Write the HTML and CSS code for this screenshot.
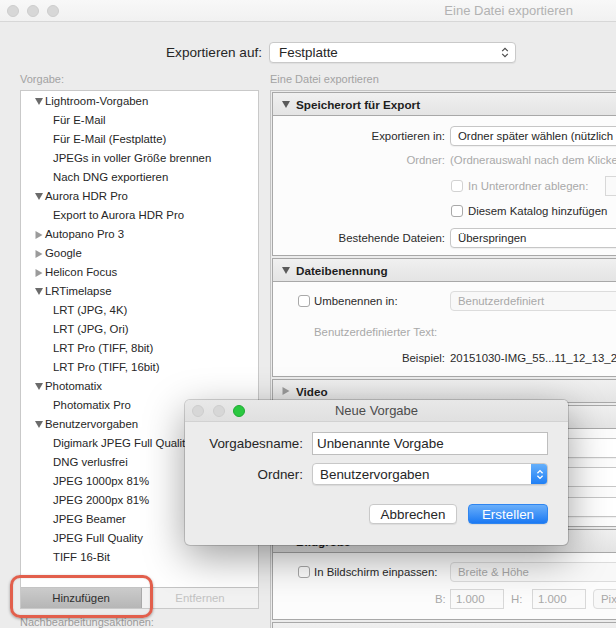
FILE: index.html
```html
<!DOCTYPE html>
<html lang="de">
<head>
<meta charset="utf-8">
<title>Eine Datei exportieren</title>
<link rel="stylesheet" href="styles.css">
</head>
<body>
<div class="titlebar">
  <div class="lights"><span class="light"></span><span class="light"></span><span class="light"></span></div>
  <div class="wtitle">Eine Datei exportieren</div>
</div>

<div class="exportbar">
  <div class="exlabel">Exportieren auf:</div>
  <div class="popup">
    <span>Festplatte</span>
    <svg class="chev" width="8" height="11" viewBox="0 0 8 11"><path d="M1.2 4.2 L4 1.4 L6.8 4.2 M1.2 6.8 L4 9.6 L6.8 6.8" fill="none" stroke="#4a4a4a" stroke-width="1.2"/></svg>
  </div>
</div>

<div class="headings">
  <div>Vorgabe:</div>
  <div>Eine Datei exportieren</div>
</div>

<div class="main">
  <div class="leftcol">
    <div class="listbox">
      <div class="tree">
        <div class="row group"><svg class="tri" width="8" height="7" viewBox="0 0 8 7"><polygon points="0,0 8,0 4,7" fill="#6b6b6b"/></svg>Lightroom-Vorgaben</div>
        <div class="row child">Für E-Mail</div>
        <div class="row child">Für E-Mail (Festplatte)</div>
        <div class="row child">JPEGs in voller Größe brennen</div>
        <div class="row child">Nach DNG exportieren</div>
        <div class="row group"><svg class="tri" width="8" height="7" viewBox="0 0 8 7"><polygon points="0,0 8,0 4,7" fill="#6b6b6b"/></svg>Aurora HDR Pro</div>
        <div class="row child">Export to Aurora HDR Pro</div>
        <div class="row group"><svg class="tri" width="8" height="8" viewBox="0 0 8 8"><polygon points="0.5,0 7.5,4 0.5,8" fill="#9b9b9b"/></svg>Autopano Pro 3</div>
        <div class="row group"><svg class="tri" width="8" height="8" viewBox="0 0 8 8"><polygon points="0.5,0 7.5,4 0.5,8" fill="#9b9b9b"/></svg>Google</div>
        <div class="row group"><svg class="tri" width="8" height="8" viewBox="0 0 8 8"><polygon points="0.5,0 7.5,4 0.5,8" fill="#9b9b9b"/></svg>Helicon Focus</div>
        <div class="row group"><svg class="tri" width="8" height="7" viewBox="0 0 8 7"><polygon points="0,0 8,0 4,7" fill="#6b6b6b"/></svg>LRTimelapse</div>
        <div class="row child">LRT (JPG, 4K)</div>
        <div class="row child">LRT (JPG, Ori)</div>
        <div class="row child">LRT Pro (TIFF, 8bit)</div>
        <div class="row child">LRT Pro (TIFF, 16bit)</div>
        <div class="row group"><svg class="tri" width="8" height="7" viewBox="0 0 8 7"><polygon points="0,0 8,0 4,7" fill="#6b6b6b"/></svg>Photomatix</div>
        <div class="row child">Photomatix Pro</div>
        <div class="row group"><svg class="tri" width="8" height="7" viewBox="0 0 8 7"><polygon points="0,0 8,0 4,7" fill="#6b6b6b"/></svg>Benutzervorgaben</div>
        <div class="row child">Digimark JPEG Full Quality</div>
        <div class="row child">DNG verlusfrei</div>
        <div class="row child">JPEG 1000px 81%</div>
        <div class="row child">JPEG 2000px 81%</div>
        <div class="row child">JPEG Beamer</div>
        <div class="row child">JPEG Full Quality</div>
        <div class="row child">TIFF 16-Bit</div>
      </div>
      <div class="listbuttons">
        <div class="lbtn add">Hinzufügen</div>
        <div class="lbtn remove">Entfernen</div>
      </div>
    </div>
    <div class="postlabel">Nachbearbeitungsaktionen:</div>
  </div>

  <div class="rightcol">
    <div class="section">
      <div class="shead"><svg class="tri" width="8" height="7" viewBox="0 0 8 7"><polygon points="0,0 8,0 4,7" fill="#5a5a5a"/></svg>Speicherort für Export</div>
      <div class="form f1">
        <div class="lab">Exportieren in:</div>
        <div class="ctl"><div class="sel">Ordner später wählen (nützlich für Ablage)</div></div>
        <div class="lab dim">Ordner:</div>
        <div class="ctl dim">(Ordnerauswahl nach dem Klicken auf Exportieren)</div>
        <div class="lab"></div>
        <div class="ctl"><span class="cb off"></span><span class="dim">In Unterordner ablegen:</span><span class="field off wide"></span></div>
        <div class="lab"></div>
        <div class="ctl"><span class="cb"></span><span>Diesem Katalog hinzufügen</span></div>
        <div class="lab">Bestehende Dateien:</div>
        <div class="ctl"><div class="sel">Überspringen</div></div>
      </div>
    </div>

    <div class="section">
      <div class="shead"><svg class="tri" width="8" height="7" viewBox="0 0 8 7"><polygon points="0,0 8,0 4,7" fill="#5a5a5a"/></svg>Dateibenennung</div>
      <div class="form f2">
        <div class="lab left"><span class="cb"></span><span>Umbenennen in:</span></div>
        <div class="ctl"><div class="sel off">Benutzerdefiniert</div></div>
        <div class="lab left wide dim">Benutzerdefinierter Text:</div>
        <div class="ctl"></div>
        <div class="lab">Beispiel:</div>
        <div class="ctl">20151030-IMG_55...11_12_13_2.jpg</div>
      </div>
    </div>

    <div class="section">
      <div class="shead"><svg class="tri" width="8" height="8" viewBox="0 0 8 8"><polygon points="0.5,0 7.5,4 0.5,8" fill="#9b9b9b"/></svg>Video</div>
    </div>

    <div class="section">
      <div class="shead"><svg class="tri" width="8" height="7" viewBox="0 0 8 7"><polygon points="0,0 8,0 4,7" fill="#5a5a5a"/></svg>Dateieinstellungen</div>
      <div class="form f4">
        <div class="lab">Bildformat:</div>
        <div class="ctl"><div class="sel">JPEG</div></div>
        <div class="lab">Qualität:</div>
        <div class="ctl"><span class="field wide"></span></div>
        <div class="lab">Farbraum:</div>
        <div class="ctl"><div class="sel">sRGB</div></div>
      </div>
    </div>

    <div class="section">
      <div class="shead"><svg class="tri" width="8" height="7" viewBox="0 0 8 7"><polygon points="0,0 8,0 4,7" fill="#5a5a5a"/></svg>Bildgröße</div>
      <div class="form f5">
        <div class="lab left"><span class="cb"></span><span>In Bildschirm einpassen:</span></div>
        <div class="ctl"><div class="sel off">Breite &amp; Höhe</div></div>
        <div class="lab"></div>
        <div class="ctl dims">
          <span class="dim blab">B:</span><span class="field off num">1.000</span>
          <span class="dim hlab">H:</span><span class="field off num">1.000</span>
          <span class="sel off unit">Pixel</span>
        </div>
      </div>
    </div>

    <div class="section">
      <div class="shead"><svg class="tri" width="8" height="8" viewBox="0 0 8 8"><polygon points="0.5,0 7.5,4 0.5,8" fill="#9b9b9b"/></svg>Ausgabeschärfe</div>
    </div>
  </div>
</div>

<div class="highlight"></div>

<div class="dialog">
  <div class="dtitle">
    <div class="lights dl"><span class="light"></span><span class="light"></span><span class="light green"></span></div>
    <div class="dtext">Neue Vorgabe</div>
  </div>
  <div class="dbody">
    <div class="dlab">Vorgabesname:</div>
    <div class="dinput">Unbenannte Vorgabe</div>
    <div class="dlab">Ordner:</div>
    <div class="dpopup">
      <span>Benutzervorgaben</span>
      <span class="dstep"><svg width="8" height="11" viewBox="0 0 8 11"><path d="M1.4 4.2 L4 1.6 L6.6 4.2 M1.4 6.8 L4 9.4 L6.6 6.8" fill="none" stroke="#ffffff" stroke-width="1.3"/></svg></span>
    </div>
    <div class="dbtns">
      <div class="btn">Abbrechen</div>
      <div class="btn primary">Erstellen</div>
    </div>
  </div>
</div>
</body>
</html>
```

FILE: styles.css
```css
* { box-sizing: border-box; }
html, body { margin: 0; padding: 0; }
body {
  width: 616px;
  height: 628px;
  overflow: hidden;
  position: relative;
  background: #ececec;
  font-family: "Liberation Sans", Arial, sans-serif;
  color: #2a2a2a;
}

/* window title bar */
.titlebar {
  height: 22px;
  display: flex;
  align-items: center;
  padding-left: 7px;
  background: linear-gradient(#f8f8f8, #f1f1f1);
  border-bottom: 1px solid #d7d7d7;
}
.lights { display: flex; gap: 8px; }
.light {
  width: 12px;
  height: 12px;
  border-radius: 50%;
  background: #d7d7d7;
  border: 1px solid #cdcdcd;
}
.wtitle {
  margin-left: auto;
  margin-right: 43px;
  font-size: 13px;
  color: #b2b2b2;
}

/* export target */
.exportbar {
  margin-top: 20px;
  display: grid;
  grid-template-columns: 262px 247px;
  column-gap: 7px;
  align-items: center;
}
.exlabel { text-align: right; font-size: 13.6px; color: #262626; }
.popup {
  height: 21px;
  display: flex;
  align-items: center;
  justify-content: space-between;
  padding: 0 6px 0 9px;
  background: #fff;
  border: 1px solid #c9c9c9;
  border-radius: 4px;
  box-shadow: 0 1px 1px rgba(0,0,0,0.06);
  font-size: 13.4px;
  color: #262626;
}

.headings {
  margin-top: 9px;
  height: 14px;
  display: grid;
  grid-template-columns: 250px auto;
  padding-left: 20px;
  font-size: 11px;
  line-height: 14px;
  color: #a3a3a3;
}

/* main columns */
.main {
  margin-top: 4px;
  display: grid;
  grid-template-columns: 239px 370px;
  column-gap: 11px;
  padding-left: 20px;
}

.listbox {
  height: 519px;
  display: flex;
  flex-direction: column;
  background: #fff;
  border: 1px solid #c9c9c9;
}
.tree { flex: 1; padding-top: 1px; font-size: 11.4px; color: #262626; }
.row { height: 19px; line-height: 19px; white-space: nowrap; overflow: hidden; }
.group { display: flex; align-items: center; padding-left: 14px; }
.group .tri { margin-right: 2px; }
.child { padding-left: 32px; }

.listbuttons {
  height: 21px;
  display: flex;
  border-top: 1px solid #c4c4c4;
  font-size: 11.4px;
}
.lbtn { display: flex; align-items: center; justify-content: center; }
.add {
  width: 121px;
  background: linear-gradient(#cbcbcb, #b6b6b6);
  border-right: 1px solid #a9a9a9;
  color: #2e2e2e;
}
.remove {
  flex: 1;
  background: #f2f2f2;
  color: #c3c3c3;
}
.postlabel {
  margin-top: 7px;
  font-size: 11px;
  line-height: 13px;
  color: #9c9c9c;
}

/* right settings panel */
.rightcol {
  border-left: 1px solid #c3c3c3;
  border-top: 1px solid #c3c3c3;
  padding: 1px 0 0 1px;
  height: 560px;
}
.section {
  border: 1px solid #a8a8a8;
  border-right: none;
  margin-bottom: 2px;
  background: #fcfcfc;
}
.shead {
  height: 22px;
  display: flex;
  align-items: center;
  gap: 6px;
  padding-left: 9px;
  background: linear-gradient(#f0f0f0, #e4e4e4);
  font-size: 11.7px;
  font-weight: bold;
  color: #1e1e1e;
}
.section .shead + .form { border-top: 1px solid #a8a8a8; }

.form {
  display: grid;
  grid-template-columns: 172px 1fr;
  column-gap: 5px;
  align-items: center;
  font-size: 11.4px;
  color: #2a2a2a;
  white-space: nowrap;
}
.f1 { padding: 8px 0 1px; grid-template-rows: 24px 24px 28px 22px 32px; }
.f2 { padding: 7px 0 11px; grid-template-rows: 24px 38px 14px; }
.f4 { padding: 5px 0 4px; grid-template-rows: 28px 30px 30px; }
.f5 { padding: 7px 0 5px; grid-template-rows: 24px 30px; }

.lab { text-align: right; }
.lab.left { display: flex; align-items: center; gap: 4px; padding-left: 24px; text-align: left; }
.lab.wide { padding-left: 41px; }
.ctl { display: flex; align-items: center; gap: 5px; overflow: visible; }
.dim { color: #a9a9a9; }

.sel {
  height: 20px;
  width: 240px;
  display: flex;
  align-items: center;
  padding-left: 7px;
  background: #fff;
  border: 1px solid #c6c6c6;
  border-radius: 4px;
  box-shadow: 0 1px 1px rgba(0,0,0,0.05);
  color: #262626;
}
.sel.off { background: #f8f8f8; border-color: #dcdcdc; color: #a8a8a8; box-shadow: none; }

.cb {
  width: 12px;
  height: 12px;
  flex: none;
  margin-left: 1px;
  background: #fff;
  border: 1px solid #a9a9a9;
  border-radius: 3px;
}
.cb.off { border-color: #d2d2d2; }

.field {
  height: 20px;
  background: #fff;
  border: 1px solid #c6c6c6;
}
.field.wide { width: 60px; margin-left: 12px; }
.f4 .field.wide { width: 240px; margin-left: 0; }
.field.off { border-color: #d8d8d8; background: #fafafa; }
.dims { gap: 0; }
.blab { margin-left: -15px; width: 15px; }
.num {
  width: 54px;
  display: flex;
  align-items: center;
  padding-left: 5px;
  color: #a8a8a8;
}
.hlab { margin-left: 7px; width: 21px; }
.unit { width: 60px; margin-left: 7px; }

/* red annotation */
.highlight {
  position: absolute;
  left: 10px;
  top: 575px;
  width: 143px;
  height: 43px;
  border: 3.5px solid #e25f4c;
  border-radius: 10px;
  box-shadow: 0 1px 3px rgba(0,0,0,0.35), inset 0 0 2px rgba(0,0,0,0.15);
}

/* modal dialog */
.dialog {
  position: absolute;
  left: 185px;
  top: 400px;
  width: 383px;
  height: 145px;
  background: #ececec;
  border-radius: 5px;
  overflow: hidden;
  box-shadow: 0 0 0 1px rgba(0,0,0,0.16), 0 12px 40px rgba(0,0,0,0.38);
}
.dtitle {
  height: 22px;
  position: relative;
  display: flex;
  align-items: center;
  padding-left: 7px;
  background: linear-gradient(#e8e8e8, #e0e0e0);
  border-bottom: 1px solid #d2d2d2;
}
.dl { gap: 8.5px; }
.light.green { background: #2ac840; border-color: #1faa33; }
.dtext {
  position: absolute;
  left: 0;
  right: 0;
  text-align: center;
  font-size: 13px;
  color: #4c4c4c;
  pointer-events: none;
}
.dbody {
  display: grid;
  grid-template-columns: 118px 236px;
  column-gap: 9px;
  row-gap: 8px;
  align-items: center;
  padding-top: 10px;
  font-size: 13.4px;
  color: #262626;
}
.dlab { text-align: right; }
.dinput {
  height: 23px;
  display: flex;
  align-items: center;
  padding-left: 4px;
  background: #fff;
  border: 1px solid #bebebe;
}
.dpopup {
  height: 22px;
  display: flex;
  align-items: center;
  justify-content: space-between;
  padding-left: 7px;
  background: #fff;
  border: 1px solid #c8c8c8;
  border-radius: 4px;
  box-shadow: 0 1px 1px rgba(0,0,0,0.08);
  overflow: hidden;
}
.dstep {
  width: 17px;
  height: 22px;
  margin: -1px -1px -1px 0;
  display: flex;
  align-items: center;
  justify-content: center;
  background: linear-gradient(#69b2fb, #1c7df5);
  border-radius: 0 4px 4px 0;
}
.dbtns {
  grid-column: 1 / 3;
  margin-top: 11px;
  display: flex;
  justify-content: flex-end;
  gap: 11px;
}
.btn {
  height: 20px;
  width: 88px;
  display: flex;
  align-items: center;
  justify-content: center;
  background: #fff;
  border: 1px solid #c9c9c9;
  border-radius: 4px;
  box-shadow: 0 1px 1px rgba(0,0,0,0.07);
}
.btn.primary {
  width: 80px;
  color: #fff;
  border-color: #2f85ef;
  background: linear-gradient(#6aaffa, #1b79f3);
}
```
